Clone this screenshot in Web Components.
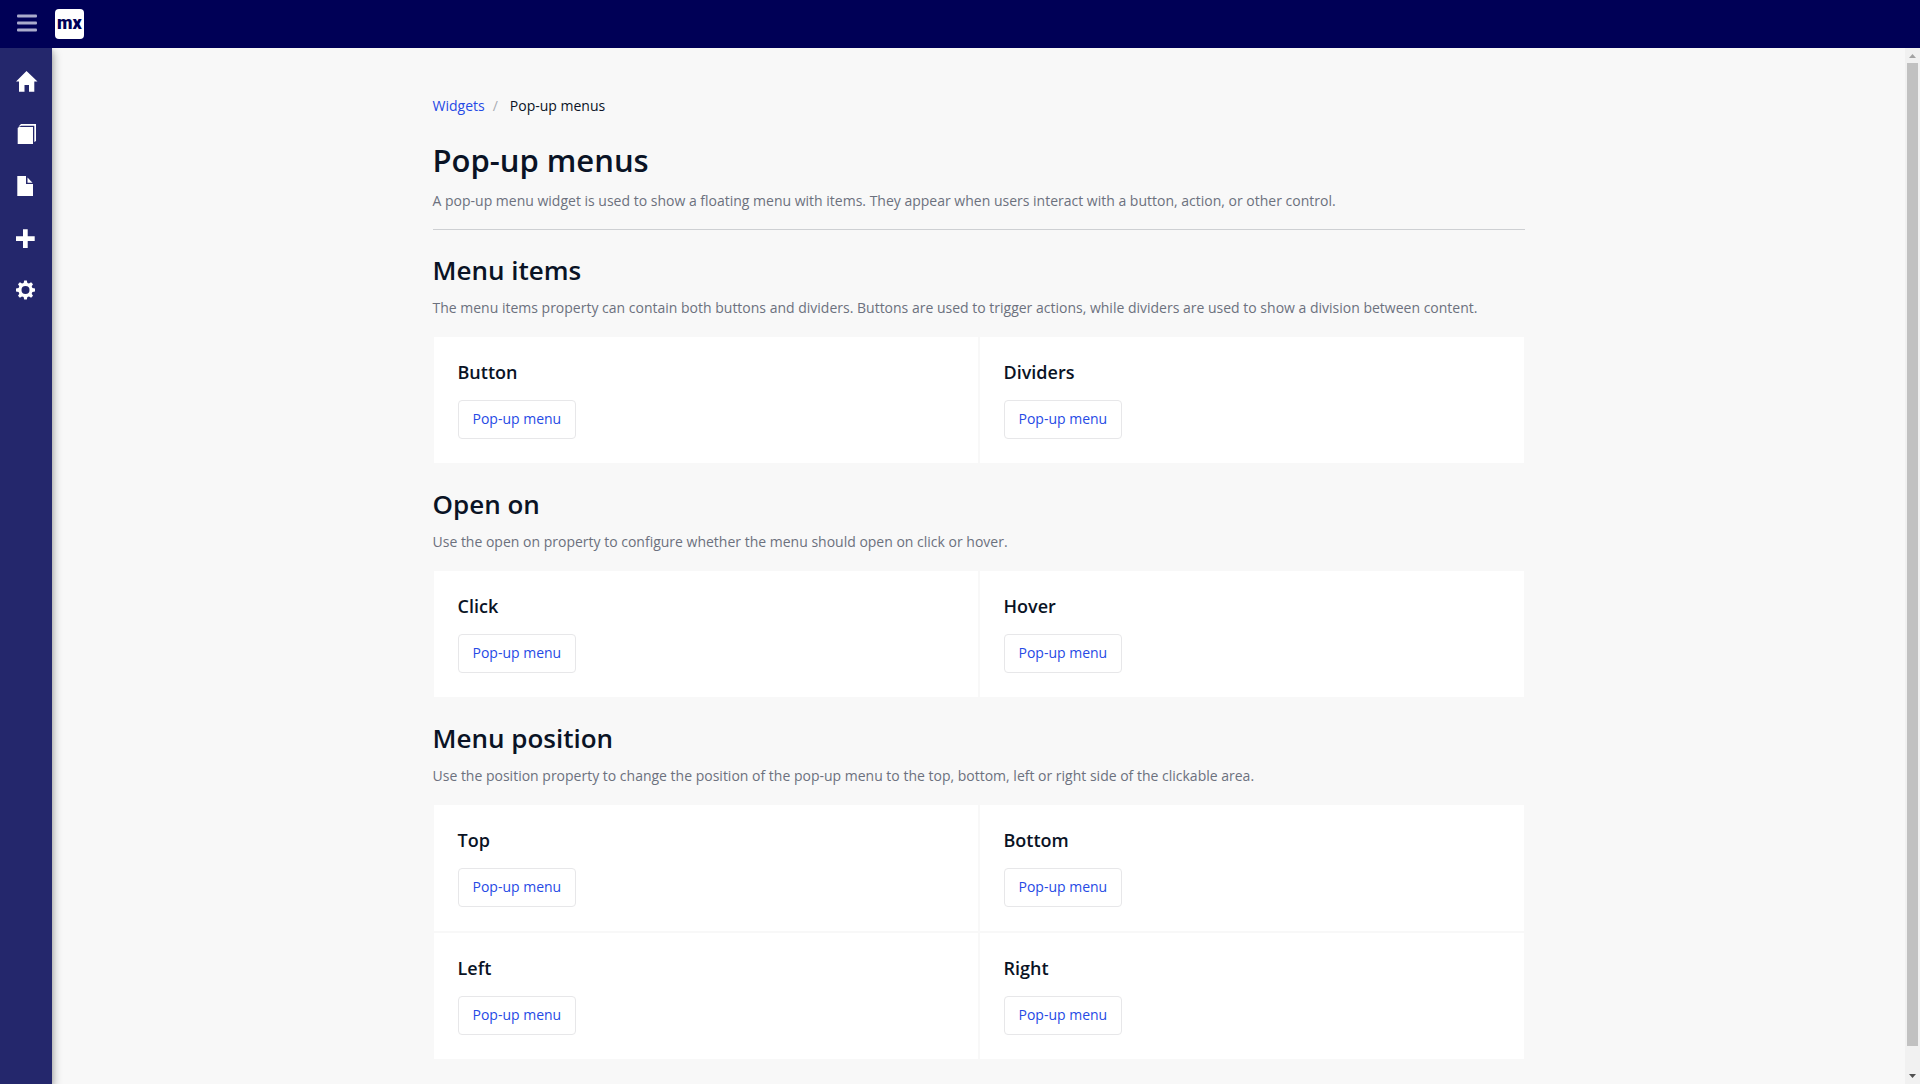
<!DOCTYPE html>
<html lang="en">
<head>
<meta charset="utf-8">
<title>Pop-up menus</title>
<style>
html, body { height: 100%; margin: 0; }
body { font: 14px/24px "Open Sans", sans-serif; color: #0a1325; background: #f8f8f8; overflow: hidden; }
</style>
</head>
<body>
<app-shell>
  <top-bar slot="header"></top-bar>
  <side-nav slot="nav"></side-nav>
  <bread-crumbs parent="Widgets">Pop-up menus</bread-crumbs>
  <page-title heading="Pop-up menus">A pop-up menu widget is used to show a floating menu with items. They appear when users interact with a button, action, or other control.</page-title>
  <doc-section heading="Menu items">
    <span slot="text">The menu items property can contain both buttons and dividers. Buttons are used to trigger actions, while dividers are used to show a division between content.</span>
    <demo-card heading="Button"></demo-card>
    <demo-card heading="Dividers"></demo-card>
  </doc-section>
  <doc-section heading="Open on">
    <span slot="text">Use the open on property to configure whether the menu should open on click or hover.</span>
    <demo-card heading="Click"></demo-card>
    <demo-card heading="Hover"></demo-card>
  </doc-section>
  <doc-section heading="Menu position">
    <span slot="text">Use the position property to change the position of the pop-up menu to the top, bottom, left or right side of the clickable area.</span>
    <demo-card heading="Top"></demo-card>
    <demo-card heading="Bottom"></demo-card>
    <demo-card heading="Left"></demo-card>
    <demo-card heading="Right"></demo-card>
  </doc-section>
  <scroll-rail slot="rail"></scroll-rail>
</app-shell>
<script>
const define = (name, render) => customElements.define(name, class extends HTMLElement {
  connectedCallback() {
    if (!this.shadowRoot) this.attachShadow({ mode: "open" }).innerHTML = render(this);
  }
});

define("app-shell", () => `
<style>
:host { display: flex; flex-direction: column; height: 100vh; }
.body { display: flex; flex: 1; min-height: 0; }
main { flex: 1; min-width: 0; overflow: hidden; padding: 46px 24px 24px; }
.page { max-width: 1092px; margin: 0 auto; }
</style>
<slot name="header"></slot>
<div class="body">
  <slot name="nav"></slot>
  <main><div class="page"><slot></slot></div></main>
  <slot name="rail"></slot>
</div>`);

define("top-bar", () => `
<style>
:host { display: block; position: relative; z-index: 2; background: #000056; }
header { display: flex; align-items: center; height: 48px; padding-left: 17px; gap: 18px; }
button { border: 0; padding: 0; background: none; display: flex; }
.logo { display: flex; align-items: center; justify-content: center; width: 29px; height: 30px; border-radius: 4px; background: #fff; color: #000056; font: 900 18px/28px "Roboto", sans-serif; text-decoration: none; }
.logo span { padding-bottom: 2px; }
</style>
<header>
  <button aria-label="Toggle menu"><svg width="20" height="20" viewBox="0 0 20 20" fill="#aaabcc"><rect y="0.5" width="20" height="3" rx="1"/><rect y="7.5" width="20" height="3" rx="1"/><rect y="14.5" width="20" height="3" rx="1"/></svg></button>
  <a class="logo" href="#" aria-label="Home"><span>mx</span></a>
</header>`);

define("side-nav", () => `
<style>
:host { display: block; flex: none; width: 52px; background: #24276c; position: relative; z-index: 1; box-shadow: 0 0 4px rgba(0,0,0,.14), 2px 4px 8px rgba(0,0,0,.28); }
nav { display: flex; flex-direction: column; padding-top: 8px; }
a { display: flex; align-items: center; height: 52px; padding-left: 16px; }
svg { fill: #fff; }
</style>
<nav>
  <a href="#" aria-label="Home"><svg width="22" height="22" viewBox="0 0 22 22"><path d="M10.5 0L21.500 10.500H18.300V20.700H13V14H8.500V20.700H3V10.500H0Z"/></svg></a>
  <a href="#" aria-label="Pages"><svg width="22" height="22" viewBox="0 0 22 22"><path d="M1.700 5L3 4H17V21H1.700Z"/><path d="M2.500 3.500L5 1H20V18L18.300 19V2.700H5L4 3.500Z"/></svg></a>
  <a href="#" aria-label="Document"><svg width="22" height="22" viewBox="0 0 22 22"><path d="M1.300 1H10V9H17V21H1.300Z"/><path d="M11.500 2.500L16.500 7.700H11.500Z"/></svg></a>
  <a href="#" aria-label="Add"><svg width="22" height="22" viewBox="0 0 22 22"><path d="M7 2.300H11.700V9.300H18.700V14H11.700V21H7V14H0V9.300H7Z"/></svg></a>
  <a href="#" aria-label="Settings"><svg width="22" height="22" viewBox="0 0 22 22"><path fill-rule="evenodd" d="M8.200 1.500H10.800L11.400 3.900L13 4.600L15.100 3.300L17 5.200L15.700 7.300L16.400 8.900L19 9.600V12.400L16.400 13L15.700 14.700L17 16.800L15.100 18.700L13 17.400L11.400 18.100L10.800 20.500H8.200L7.600 18.100L6 17.400L3.900 18.700L2 16.800L3.300 14.700L2.600 13L0 12.400V9.600L2.600 8.900L3.300 7.300L2 5.200L3.900 3.300L6 4.600L7.600 3.900ZM9.500 7A4 4 0 1 0 9.500 15A4 4 0 1 0 9.500 7Z"/></svg></a>
</nav>`);

define("bread-crumbs", el => `
<style>
:host { display: block; }
ol { display: flex; list-style: none; margin: 0; padding: 0; }
a { color: #264ae5; text-decoration: none; }
.sep { padding: 0 12px 0 8px; color: #a9acb3; }
</style>
<nav aria-label="Breadcrumb"><ol>
  <li><a href="#">${el.getAttribute("parent")}</a></li>
  <li class="sep" aria-hidden="true">/</li>
  <li><slot></slot></li>
</ol></nav>`);

define("page-title", el => `
<style>
:host { display: block; padding: 22px 0 16px; border-bottom: 1px solid #ced0d3; }
h1 { margin: 0 0 9px; font-size: 31px; line-height: 40px; font-weight: 600; }
p { margin: 0; color: #6c717e; }
</style>
<h1>${el.getAttribute("heading")}</h1>
<p><slot></slot></p>`);

define("doc-section", el => `
<style>
:host { display: block; margin-top: 24px; }
h2 { margin: 0 0 10px; font-size: 26px; line-height: 32px; font-weight: 600; }
p { margin: 0 0 16px; color: #6c717e; }
.grid { display: grid; grid-template-columns: 1fr 1fr; }
</style>
<section>
  <h2>${el.getAttribute("heading")}</h2>
  <p><slot name="text"></slot></p>
  <div class="grid"><slot></slot></div>
</section>`);

define("demo-card", el => `
<style>
:host { display: flex; flex-direction: column; align-items: flex-start; gap: 17px; padding: 24px; background: #fff; border: 1px solid #f8f8f8; }
h3 { margin: 0; font-size: 18px; line-height: 22px; font-weight: 600; }
button { height: 39px; padding: 0 14px 2px; border: 1px solid #e7e7e9; border-radius: 4px; background: #fff; color: #264ae5; font: inherit; line-height: 22px; }
</style>
<h3>${el.getAttribute("heading")}</h3>
<button type="button">Pop-up menu</button>`);

define("scroll-rail", () => `
<style>
:host { display: flex; flex-direction: column; align-items: center; flex: none; width: 15px; background: #f1f1f1; }
.track { flex: 1; align-self: stretch; display: flex; padding: 0 2px 23px; }
.thumb { flex: 1; background: #c1c1c1; }
svg { display: block; }
</style>
<svg width="15" height="15"><path d="M4 10L7.500 6L11 10Z" fill="#a3a3a3"/></svg>
<div class="track"><div class="thumb"></div></div>
<svg width="15" height="15"><path d="M4 5L7.500 9L11 5Z" fill="#505050"/></svg>`);
</script>
</body>
</html>
